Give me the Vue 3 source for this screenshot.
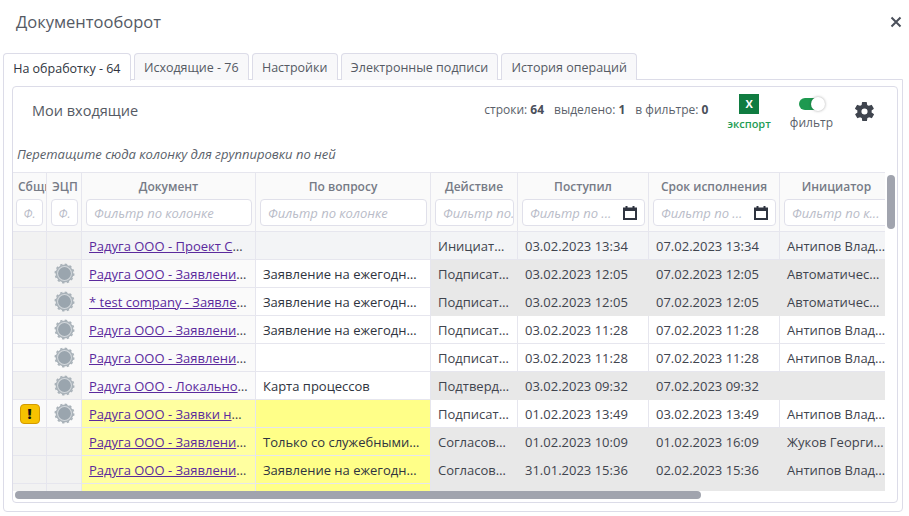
<template>
  <div class="page">
    <div class="head">
      <span class="head-title">Документооборот</span>
      <svg class="close" width="12" height="12" viewBox="0 0 12 12"><path d="M1.5 1.5l9 9M10.5 1.5l-9 9" stroke="#4a4f5a" stroke-width="2" fill="none"/></svg>
    </div>

    <div class="tabs">
      <div v-for="(t, i) in tabs" :key="t" class="tab" :class="{ active: i === 0 }">{{ t }}</div>
    </div>

    <div class="tab-body">
      <div class="card">
        <div class="toolbar">
          <div class="card-title">Мои входящие</div>
          <div class="stats">
            <span>строки: <b>64</b></span>
            <span>выделено: <b>1</b></span>
            <span>в фильтре: <b>0</b></span>
          </div>
          <div class="tool export">
            <div class="xls">X</div>
            <div class="tool-label">экспорт</div>
          </div>
          <div class="tool filter">
            <div class="switch"><div class="knob"></div></div>
            <div class="tool-label">фильтр</div>
          </div>
          <svg class="gear" width="23" height="23" viewBox="0 0 24 24">
            <path fill="#3f444e" fill-rule="evenodd" d="M19.4 13a7.6 7.6 0 0 0 0-2l2.1-1.6a.5.5 0 0 0 .1-.7l-2-3.4a.5.5 0 0 0-.6-.2l-2.5 1a7.3 7.3 0 0 0-1.7-1l-.4-2.7a.5.5 0 0 0-.5-.4h-4a.5.5 0 0 0-.5.4l-.4 2.7a7.3 7.3 0 0 0-1.7 1l-2.5-1a.5.5 0 0 0-.6.2l-2 3.4a.5.5 0 0 0 .1.7L4.6 11a7.6 7.6 0 0 0 0 2l-2.1 1.6a.5.5 0 0 0-.1.7l2 3.4c.1.2.4.3.6.2l2.5-1c.5.4 1.1.7 1.7 1l.4 2.7c0 .2.3.4.5.4h4c.2 0 .5-.2.5-.4l.4-2.7c.6-.3 1.2-.6 1.7-1l2.5 1c.2.1.5 0 .6-.2l2-3.4a.5.5 0 0 0-.1-.7L19.4 13zM12 15.2a3.2 3.2 0 1 1 0-6.4 3.2 3.2 0 0 1 0 6.4z"/>
          </svg>
        </div>

        <div class="group-hint">Перетащите сюда колонку для группировки по ней</div>

        <div class="grid-wrap">
          <div class="grid-view">
            <table class="grid">
              <colgroup>
                <col v-for="c in columns" :key="c.title" :style="{ width: c.width + 'px' }">
              </colgroup>
              <thead>
                <tr class="titles">
                  <th v-for="c in columns" :key="c.title" :class="{ tight: c.tight }">{{ c.title }}</th>
                </tr>
                <tr class="filters">
                  <th v-for="c in columns" :key="c.title">
                    <div class="filter-box" :class="{ small: c.tight }">
                      <span class="ph">{{ c.ph }}</span>
                      <svg v-if="c.date" class="cal" width="14" height="14" viewBox="0 0 14 14">
                        <path fill="#2f3440" d="M2.5 0h2v1.5h5V0h2v1.5H14V14H0V1.5h2.5zM2 5v7h10V5z"/>
                      </svg>
                    </div>
                  </th>
                </tr>
              </thead>
              <tbody>
                <tr v-for="(r, i) in rows" :key="i" :class="r.cls">
                  <td class="c-flag">
                    <div v-if="r.warn" class="warn">!</div>
                  </td>
                  <td class="c-sign">
                    <svg v-if="r.sign" width="21" height="21" viewBox="0 0 21 21">
                      <circle cx="10.5" cy="10.5" r="8.9" fill="#a9b2b9"/>
                      <circle cx="10.5" cy="10.5" r="9.2" fill="none" stroke="#a9b2b9" stroke-width="1.6" stroke-dasharray="2.4 2.42"/>
                      <circle cx="10.5" cy="10.5" r="7.4" fill="#d3d8dc"/>
                      <circle cx="10.5" cy="10.5" r="6.4" fill="#9aa5ae"/>
                    </svg>
                  </td>
                  <td class="c-doc"><a href="#" @click.prevent>{{ r.doc }}</a></td>
                  <td class="c-subj">{{ r.subj }}</td>
                  <td class="c-rest">{{ r.act }}</td>
                  <td class="c-rest">{{ r.got }}</td>
                  <td class="c-rest">{{ r.due }}</td>
                  <td class="c-rest">{{ r.who }}</td>
                </tr>
              </tbody>
            </table>
          </div>
          <div class="bar-h"></div>
          <div class="bar-v"></div>
        </div>
      </div>
    </div>
  </div>
</template>

<script setup>
const tabs = ['На обработку - 64', 'Исходящие - 76', 'Настройки', 'Электронные подписи', 'История операций']

const columns = [
  { title: 'Сбщий', width: 34, tight: true, ph: 'Ф.' },
  { title: 'ЭЦП', width: 35, tight: true, ph: 'Ф.' },
  { title: 'Документ', width: 174, ph: 'Фильтр по колонке' },
  { title: 'По вопросу', width: 175, ph: 'Фильтр по колонке' },
  { title: 'Действие', width: 87, ph: 'Фильтр по...' },
  { title: 'Поступил', width: 131, ph: 'Фильтр по ...', date: true },
  { title: 'Срок исполнения', width: 131, ph: 'Фильтр по ...', date: true },
  { title: 'Инициатор', width: 114, ph: 'Фильтр по к...' }
]

const rows = [
  { cls: 'r-plain', doc: 'Радуга ООО - Проект Согласование договора', subj: '', act: 'Инициатор процесса', got: '03.02.2023 13:34', due: '07.02.2023 13:34', who: 'Антипов Владимир' },
  { cls: 'r-grey', sign: true, doc: 'Радуга ООО - Заявление на отпуск', subj: 'Заявление на ежегодный отпуск', act: 'Подписать документ', got: '03.02.2023 12:05', due: '07.02.2023 12:05', who: 'Автоматический запуск' },
  { cls: 'r-grey', sign: true, doc: '* test company - Заявление на отпуск', subj: 'Заявление на ежегодный отпуск', act: 'Подписать документ', got: '03.02.2023 12:05', due: '07.02.2023 12:05', who: 'Автоматический запуск' },
  { cls: 'r-white', sign: true, doc: 'Радуга ООО - Заявление на отпуск', subj: 'Заявление на ежегодный отпуск', act: 'Подписать документ', got: '03.02.2023 11:28', due: '07.02.2023 11:28', who: 'Антипов Владимир' },
  { cls: 'r-white', sign: true, doc: 'Радуга ООО - Заявление на отпуск', subj: '', act: 'Подписать документ', got: '03.02.2023 11:28', due: '07.02.2023 11:28', who: 'Антипов Владимир' },
  { cls: 'r-grey', sign: true, doc: 'Радуга ООО - Локальное положение', subj: 'Карта процессов', act: 'Подтвердить', got: '03.02.2023 09:32', due: '07.02.2023 09:32', who: '' },
  { cls: 'r-white r-yellow', warn: true, sign: true, doc: 'Радуга ООО - Заявки на оплату', subj: '', act: 'Подписать документ', got: '01.02.2023 13:49', due: '03.02.2023 13:49', who: 'Антипов Владимир' },
  { cls: 'r-grey r-yellow', doc: 'Радуга ООО - Заявление на отпуск', subj: 'Только со служебными записками', act: 'Согласовать', got: '01.02.2023 10:09', due: '01.02.2023 16:09', who: 'Жуков Георгий Иванович' },
  { cls: 'r-grey r-yellow', doc: 'Радуга ООО - Заявление на отпуск', subj: 'Заявление на ежегодный отпуск', act: 'Согласовать', got: '31.01.2023 15:36', due: '02.02.2023 15:36', who: 'Антипов Владимир' },
  { cls: 'r-grey r-yellow', doc: '', subj: '', act: '', got: '', due: '', who: '' }
]
</script>

<style>
html, body {
  margin: 0;
  background: #fff;
}
</style>

<style scoped>
.page {
  width: 909px;
  height: 516px;
  box-sizing: border-box;
  padding: 0 6px 4px 3px;
  display: flex;
  flex-direction: column;
  font-family: "Open Sans", "Noto Sans", sans-serif;
  font-size: 12px;
  color: #3f444e;
  overflow: hidden;
}

.head {
  height: 53px;
  flex: none;
  display: flex;
  align-items: flex-start;
  justify-content: space-between;
  padding: 11px 1px 0 13px;
  box-sizing: border-box;
}

.head-title {
  font-size: 16.5px;
  font-weight: 500;
  line-height: 22px;
  color: #555a64;
}

.close {
  margin-top: 5px;
}

.tabs {
  display: flex;
  gap: 3px;
  height: 27px;
  flex: none;
  position: relative;
  z-index: 1;
}

.tab {
  padding: 0 9.2px;
  height: 26px;
  line-height: 27px;
  background: #f8f8fa;
  border: 1px solid #dcdce8;
  border-bottom: none;
  border-radius: 4px 4px 0 0;
  color: #555a64;
  font-size: 12.5px;
  font-weight: 500;
}

.tab.active {
  height: 27px;
  background: #fff;
  color: #2f3440;
  line-height: 29px;
}

.tab-body {
  flex: 1;
  min-height: 0;
  margin-top: -1px;
  border: 1px solid #dcdce8;
  border-radius: 0 0 4px 4px;
  padding: 6px 4px 8px 8px;
  display: flex;
}

.card {
  flex: 1;
  min-width: 0;
  border: 1px solid #dcdce8;
  border-radius: 4px;
  display: flex;
  flex-direction: column;
  overflow: hidden;
}

.toolbar {
  height: 55px;
  flex: none;
  display: flex;
  align-items: flex-start;
  padding: 0 21px 0 19px;
  box-sizing: border-box;
}

.card-title {
  font-size: 14.5px;
  font-weight: 500;
  line-height: 20px;
  margin-top: 14px;
  color: #555a64;
  flex: 1;
}

.stats {
  display: flex;
  gap: 10px;
  font-size: 12px;
  line-height: 16px;
  margin-top: 15px;
  color: #5a5f6a;
}

.stats b {
  color: #4a4f5a;
  font-weight: 700;
}

.tool {
  display: flex;
  flex-direction: column;
  align-items: center;
}

.tool-label {
  font-size: 12px;
  line-height: 14px;
  margin-top: 3px;
  color: #5a5f6a;
}

.export {
  margin: 7px 0 0 19px;
}

.export .tool-label {
  font-size: 11px;
  color: #1f9d55;
  font-weight: 600;
}

.xls {
  width: 20px;
  height: 20px;
  background: #107c41;
  color: #fff;
  font-size: 11px;
  font-weight: 700;
  line-height: 20px;
  text-align: center;
}

.filter {
  margin: 11px 0 0 19px;
}

.filter .tool-label {
  margin-top: 6px;
}

.switch {
  width: 25px;
  height: 12px;
  background: #1e9950;
  border-radius: 6px;
  position: relative;
}

.knob {
  position: absolute;
  right: -1px;
  top: -1px;
  width: 14px;
  height: 14px;
  background: #fff;
  border-radius: 50%;
  box-shadow: 0 0 3px rgba(0, 0, 0, 0.35);
}

.gear {
  margin: 13px 0 0 20px;
}

.group-hint {
  height: 30px;
  flex: none;
  padding: 3px 0 0 4px;
  box-sizing: border-box;
  font-style: italic;
  font-size: 13px;
  line-height: 18px;
  color: #5a5f6a;
}

.grid-wrap {
  position: relative;
  flex: 1;
  min-height: 0;
  padding-bottom: 11px;
  display: flex;
}

.grid-view {
  width: 872px;
  overflow: hidden;
}

.grid {
  table-layout: fixed;
  border-collapse: separate;
  border-spacing: 0;
  width: 881px;
  color: #3f444e;
}

.grid th,
.grid td {
  border-right: 1px solid #e6e6ee;
  border-bottom: 1px solid #e6e6ee;
  box-sizing: border-box;
  padding: 0;
}

.titles th {
  height: 27px;
  padding-top: 1px;
  background: #fafafa;
  border-top: 1px solid #e6e6ee;
  border-bottom: none;
  font-size: 12px;
  font-weight: 600;
  color: #767b86;
  text-align: center;
  white-space: nowrap;
  overflow: hidden;
}

.titles th.tight {
  text-align: left;
  padding-left: 5px;
}

.filters th {
  height: 32px;
  background: #fafafa;
  padding: 0 3px 5px 4px;
  font-weight: 400;
  vertical-align: top;
}

.filters th:first-child {
  padding-left: 3px;
}

.filter-box {
  height: 27px;
  box-sizing: border-box;
  border: 1px solid #e0e0ea;
  border-radius: 4px;
  background: #fff;
  display: flex;
  align-items: center;
  justify-content: space-between;
  padding: 0 7px;
  font-style: italic;
  font-size: 13px;
  font-weight: 400;
  white-space: nowrap;
  overflow: hidden;
  text-align: left;
}

.filter-box.small {
  padding: 0;
  justify-content: center;
  font-size: 12px;
}

.ph {
  color: #b9bcc8;
  padding-top: 1px;
}

.grid td {
  height: 28px;
  font-size: 13px;
  padding: 0 7px;
  white-space: nowrap;
  overflow: hidden;
  text-overflow: ellipsis;
}

.grid td.c-subj {
  padding-right: 9px;
}

.grid td.c-flag,
.grid td.c-sign {
  padding: 0;
  text-align: center;
  vertical-align: middle;
  text-overflow: clip;
}

.c-sign svg {
  display: block;
  margin: 0 auto;
}

.warn {
  width: 20px;
  height: 20px;
  margin: 0 auto;
  background: #f7c200;
  border: 1px solid #d39a00;
  border-radius: 4px;
  box-sizing: border-box;
  color: #111;
  font-size: 14px;
  font-weight: 800;
  line-height: 17px;
}

.c-doc a {
  color: #5b2a9d;
  text-decoration: underline;
}

.c-subj {
  color: #2f3440;
}

.r-plain td {
  background: #f3f4f6;
}

.r-plain .c-flag,
.r-plain .c-sign {
  background: #f2f2f2;
}

.r-grey .c-flag,
.r-grey .c-sign {
  background: #f2f2f2;
}

.r-grey .c-doc,
.r-white .c-flag,
.r-white .c-sign,
.r-white .c-doc {
  background: #fafafa;
}

.r-grey .c-subj,
.r-white .c-subj,
.r-white .c-rest {
  background: #fff;
}

.r-grey .c-rest {
  background: #e8e8e8;
  border-right-color: #e8e8e8;
  border-bottom-color: #e8e8e8;
}

.r-yellow .c-doc {
  background: #ffffa0;
}

.r-yellow .c-subj {
  background: #ffff88;
}

.bar-h {
  position: absolute;
  left: 2px;
  bottom: 3px;
  width: 686px;
  height: 8px;
  background: #a1a4ae;
  border-radius: 4px;
}

.bar-v {
  position: absolute;
  right: 2px;
  top: 3px;
  width: 8px;
  height: 54px;
  background: #a1a4ae;
  border-radius: 4px;
}
</style>
